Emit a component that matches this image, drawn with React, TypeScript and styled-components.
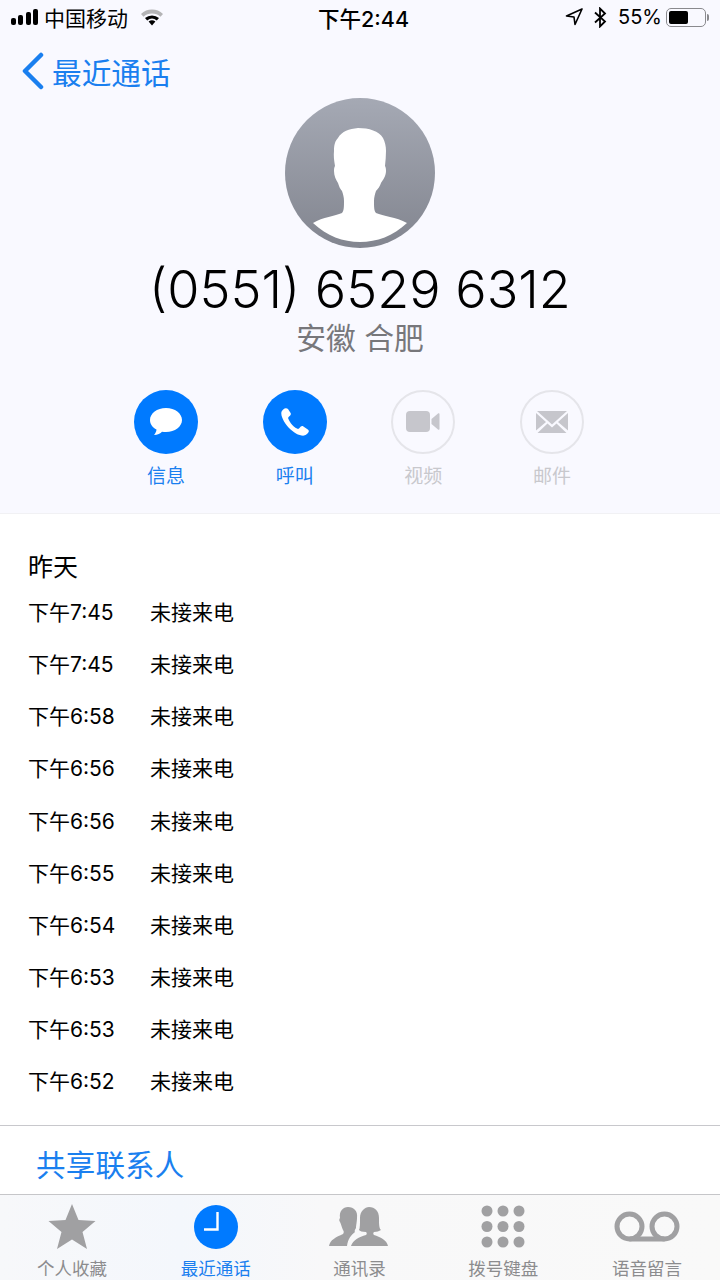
import React from 'react';
import styled, { createGlobalStyle } from 'styled-components';

const Global = createGlobalStyle`
  html, body { margin: 0; padding: 0; background: #fff; }
  body { font-family: 'Inter', 'Noto Sans CJK SC', sans-serif; }
`;

const FONT = `'Inter', 'Noto Sans CJK SC', sans-serif`;

const Page = styled.div`
  width: 720px;
  height: 1280px;
  display: flex;
  flex-direction: column;
  overflow: hidden;
  background: #fff;
  font-family: ${FONT};
`;

const Header = styled.header`
  height: 514px;
  flex: none;
  background: #f9f9ff;
  border-bottom: 1px solid #f1f1f4;
  box-sizing: border-box;
  display: flex;
  flex-direction: column;
`;

const StatusBar = styled.div`
  height: 36px;
  box-sizing: border-box;
  display: flex;
  align-items: center;
  justify-content: space-between;
  padding: 0 11px 2px 11px;
  color: #000;
  font-size: 21px;
`;

const StatusLeft = styled.div`
  display: flex;
  align-items: center;
  gap: 6px;
  width: 229px;
`;

const StatusRight = styled.div`
  display: flex;
  align-items: center;
  justify-content: flex-end;
  gap: 11px;
  width: 222px;
  font-size: 20px;
`;

const Clock = styled.div`
  font-size: 21.5px;
  font-weight: 500;
`;

const Signal = styled.div`
  display: flex;
  align-items: flex-end;
  gap: 2.3px;
  height: 16px;
`;

const SignalBar = styled.span<{ $h: number }>`
  width: 5px;
  height: ${(p) => p.$h}px;
  background: #000;
  border-radius: 2px;
`;

const Battery = styled.div`
  display: flex;
  align-items: center;
  gap: 1px;
  margin-left: -7px;
`;

const BatteryBody = styled.div`
  width: 40px;
  height: 19px;
  box-sizing: border-box;
  border: 1.5px solid #8a8a8e;
  border-radius: 5px;
  padding: 2px;
  display: flex;
`;

const BatteryLevel = styled.div`
  width: 55%;
  background: #000;
  border-radius: 2px;
`;

const BatteryTip = styled.div`
  width: 2px;
  height: 7px;
  background: #8a8a8e;
  border-radius: 0 2px 2px 0;
`;

const NavRow = styled.div`
  height: 62px;
  box-sizing: border-box;
  padding: 8px 22px 0 21px;
  display: flex;
  align-items: center;
  gap: 7px;
  color: #1a7fef;
  font-size: 29.7px;
`;

const Contact = styled.div`
  display: flex;
  flex-direction: column;
  align-items: center;
`;

const Avatar = styled.svg`
  display: block;
  width: 150px;
  height: 150px;
`;

const PhoneNumber = styled.div`
  font-size: 52.2px;
  font-weight: 300;
  line-height: 60px;
  margin-top: 11px;
  color: #000;
`;

const Location = styled.div`
  font-size: 29.8px;
  line-height: 38px;
  color: #77777b;
`;

const Actions = styled.div`
  display: flex;
  justify-content: center;
  gap: 64.6px;
  margin-top: 33px;
  padding-right: 2px;
`;

const Action = styled.div<{ $off?: boolean }>`
  width: 64px;
  display: flex;
  flex-direction: column;
  align-items: center;
  gap: 10px;
  font-size: 19px;
  line-height: 26px;
  white-space: nowrap;
  color: ${(p) => (p.$off ? '#c8c8cd' : '#1a7fef')};
`;

const ActionCircle = styled.div<{ $off?: boolean }>`
  width: 64px;
  height: 64px;
  box-sizing: border-box;
  border-radius: 50%;
  display: flex;
  align-items: center;
  justify-content: center;
  background: ${(p) => (p.$off ? 'transparent' : '#007aff')};
  border: ${(p) => (p.$off ? '2px solid #e5e5ea' : 'none')};
`;

const Content = styled.main`
  flex: 1;
  min-height: 0;
  display: flex;
  flex-direction: column;
`;

const Calls = styled.section`
  padding: 35px 28px 0;
  height: 612px;
  box-sizing: border-box;
  border-bottom: 1px solid #c8c8cc;
  flex: none;
`;

const DayTitle = styled.div`
  font-size: 25px;
  line-height: 36px;
  color: #000;
`;

const CallRow = styled.div`
  height: 52.15px;
  display: flex;
  align-items: center;
  font-size: 21px;
  color: #000;
`;

const CallTime = styled.span`
  width: 122px;
`;

const ShareLink = styled.div`
  flex: 1;
  padding-left: 36px;
  font-size: 29.5px;
  letter-spacing: 0.2px;
  line-height: 78px;
  color: #1a7fef;
`;

const TabBar = styled.nav`
  height: 86px;
  flex: none;
  box-sizing: border-box;
  border-top: 1px solid #c6c6c9;
  background: linear-gradient(90deg, #f7f8fa 0%, #f4f7fc 25%, #f8f8f9 45%, #f9f9f9 100%);
  display: grid;
  grid-template-columns: repeat(5, 1fr);
  padding-right: 1px;
`;

const Tab = styled.div<{ $active?: boolean }>`
  display: flex;
  flex-direction: column;
  align-items: center;
  font-size: 17.5px;
  line-height: 22px;
  color: ${(p) => (p.$active ? '#1a7fef' : '#8c8c8e')};
`;

const TabIcon = styled.div`
  height: 63px;
  display: flex;
  align-items: center;
  justify-content: center;
`;

const calls = ['7:45', '7:45', '6:58', '6:56', '6:56', '6:55', '6:54', '6:53', '6:53', '6:52'];

export default function App() {
  return (
    <Page>
      <Global />
      <Header>
        <StatusBar>
          <StatusLeft>
            <Signal>
              <SignalBar $h={7} />
              <SignalBar $h={10} />
              <SignalBar $h={13} />
              <SignalBar $h={16} />
            </Signal>
            <span>中国移动</span>
            <svg width="24" height="18" viewBox="0 0 24 18" style={{ marginLeft: 6 }}>
              <path d="M1 6 A16 16 0 0 1 23 6 L20.5 8.8 A12.5 12.5 0 0 0 3.5 8.8 Z" fill="#b4b4b6" />
              <path d="M5 10 A11 11 0 0 1 19 10 L16.8 12.4 A8 8 0 0 0 7.2 12.4 Z" fill="#000" />
              <path d="M8.6 13.6 A5.5 5.5 0 0 1 15.4 13.6 L12 17.4 Z" fill="#000" />
            </svg>
          </StatusLeft>
          <Clock>下午2:44</Clock>
          <StatusRight>
            <svg width="18" height="18" viewBox="0 0 18 18">
              <path d="M17 1 L1.5 8 L9 9 L10 16.5 Z" fill="none" stroke="#000" strokeWidth="1.6" strokeLinejoin="round" />
            </svg>
            <svg width="13" height="21" viewBox="0 0 13 21">
              <path d="M1 5.5 L11 14.5 L6 19.5 L6 1.5 L11 6.5 L1 15.5" fill="none" stroke="#000" strokeWidth="1.8" />
            </svg>
            <span>55%</span>
            <Battery>
              <BatteryBody>
                <BatteryLevel />
              </BatteryBody>
              <BatteryTip />
            </Battery>
          </StatusRight>
        </StatusBar>
        <NavRow>
          <svg width="24" height="38" viewBox="0 0 24 38">
            <path d="M20 3 L4 19 L20 35" fill="none" stroke="#1a7fef" strokeWidth="4.5" strokeLinecap="round" strokeLinejoin="round" />
          </svg>
          <span>最近通话</span>
        </NavRow>
        <Contact>
          <Avatar viewBox="0 0 150 150">
            <defs>
              <linearGradient id="avatarFill" x1="0" y1="0" x2="0" y2="1">
                <stop offset="0" stopColor="#a5a9b4" />
                <stop offset="1" stopColor="#82858f" />
              </linearGradient>
            </defs>
            <circle cx="75" cy="75" r="75" fill="url(#avatarFill)" />
            <path
              d="M28 125 C38 119 50 118 57 115 C59 113 59 108 59 103 C59 99 58 96 57 93 C55 91 54 88 53 85 C51 82 49 78 49 73 C49 70 49.500 69 50 68 C49 62 48.500 58 49 53 C49 47 50 43 53 40 C57 33 64 31 73 30 C84 30 94 33 98 40 C100 44 101 48 101 53 C101 58 100.500 63 100 68 C100.500 69 101 70 101 73 C101 78 98 82 96 85 C95 88 93 91 91 93 C90 96 89 99 89 103 C89 108 89 113 91 115 C98 118 111 119 122 125 C108 138 92 144 75 144 C58 144 42 138 28 125 Z"
              fill="#fff"
            />
          </Avatar>
          <PhoneNumber>(0551) 6529 6312</PhoneNumber>
          <Location>安徽 合肥</Location>
        </Contact>
        <Actions>
          <Action>
            <ActionCircle>
              <svg width="34" height="32" viewBox="0 0 34 32">
                <path d="M17 2 C8 2 1 7.5 1 14 C1 18 3.5 21.5 7.5 23.6 C7.4 25.5 6.5 27.5 5 29 C8.5 29 11.5 27.5 13 25.7 C14.3 25.9 15.6 26 17 26 C26 26 33 20.5 33 14 C33 7.5 26 2 17 2 Z" fill="#fff" />
              </svg>
            </ActionCircle>
            信息
          </Action>
          <Action>
            <ActionCircle>
              <svg width="30" height="30" viewBox="0 0 30 30">
                <path d="M6 1.2 C4.5 1 2 3 1.4 5 C0.6 9 4 15.5 8.5 20.4 C13.5 25.5 19.5 29 24 28.6 C26 28.3 28.4 26 28.8 24.6 C29 23.6 28.6 23 27.8 22.4 L23.4 19.4 C22.4 18.8 21.6 18.8 20.8 19.6 L19 21.4 C18.4 22 17.8 22 17 21.6 C15 20.4 12.5 18.4 11 16.4 C9.6 14.6 8.8 13 8.2 11.6 C8 11 8.2 10.4 8.6 10 L10.2 8.4 C11 7.6 11 6.8 10.6 6 L8 2 C7.4 1.4 6.8 1.2 6 1.2 Z" fill="#fff" />
              </svg>
            </ActionCircle>
            呼叫
          </Action>
          <Action $off>
            <ActionCircle $off>
              <svg width="34" height="22" viewBox="0 0 34 22">
                <rect x="0" y="0" width="24" height="21" rx="4" fill="#c6c6cc" />
                <path d="M25.5 8 L32 2.5 C33 2 33.5 2.5 33.5 3 V18 C33.5 18.5 33 19 32 18.5 L25.5 13 Z" fill="#c6c6cc" />
              </svg>
            </ActionCircle>
            视频
          </Action>
          <Action $off>
            <ActionCircle $off>
              <svg width="32" height="22" viewBox="0 0 32 22">
                <path d="M1 0 H31 L16 13.5 Z" fill="#c6c6cc" />
                <path d="M0 2 L10 11 L0 19.5 Z M32 2 L22 11 L32 19.5 Z" fill="#c6c6cc" />
                <path d="M1.5 22 L11.5 12.5 L16 16.5 L20.5 12.5 L30.5 22 Z" fill="#c6c6cc" />
              </svg>
            </ActionCircle>
            邮件
          </Action>
        </Actions>
      </Header>
      <Content>
        <Calls>
          <DayTitle>昨天</DayTitle>
          {calls.map((time, i) => (
            <CallRow key={i}>
              <CallTime>下午{time}</CallTime>
              <span>未接来电</span>
            </CallRow>
          ))}
        </Calls>
        <ShareLink>共享联系人</ShareLink>
      </Content>
      <TabBar>
        <Tab>
          <TabIcon>
            <svg width="48" height="46" viewBox="0 0 48 46">
              <path d="M24 0 L30.5 16 L47.5 17 L34.5 28 L39 45 L24 35.5 L9 45 L13.5 28 L0.5 17 L17.5 16 Z" fill="#a0a0a2" />
            </svg>
          </TabIcon>
          个人收藏
        </Tab>
        <Tab $active>
          <TabIcon>
            <svg width="44" height="44" viewBox="0 0 44 44">
              <circle cx="22" cy="22" r="22" fill="#007aff" />
              <path d="M23.5 7 V24.5 H10" fill="none" stroke="#fff" strokeWidth="2.4" />
            </svg>
          </TabIcon>
          最近通话
        </Tab>
        <Tab>
          <TabIcon>
            <svg width="60" height="41" viewBox="0 0 60 41">
              <path d="M0 40 C1 34 7 31 14 28 C15 27 15 25 14 24 C13 22 12 18 11 16 C10 15 10 13 11 12 C10 5 14 1 19 1 C25 1 29 5 28 12 C28 15 27 20 27 22 C26 24 25 25 26 26 C22 29 19 33 18 40 Z" fill="#a0a0a2" />
              <path d="M22 40 C24 34 30 31 37 29 C38 28 38 27 37 26 C33 26 31 25 30 24 C31 22 31 18 31 12 C31 5 36 1 40 1 C46 1 50 5 50 12 C50 18 50 22 52 24 C50 25 48 26 45 26 C44 27 44 28 45 29 C51 31 58 34 59 40 Z" fill="#a0a0a2" />
            </svg>
          </TabIcon>
          通讯录
        </Tab>
        <Tab>
          <TabIcon>
            <svg width="44" height="44" viewBox="0 0 44 44">
              {[0, 1, 2].flatMap((r) =>
                [0, 1, 2].map((c) => <circle key={`${r}${c}`} cx={6 + c * 16} cy={6 + r * 15.5} r="5.5" fill="#a0a0a2" />),
              )}
            </svg>
          </TabIcon>
          拨号键盘
        </Tab>
        <Tab>
          <TabIcon>
            <svg width="66" height="32" viewBox="0 0 66 32">
              <circle cx="15.5" cy="15.5" r="12.5" fill="none" stroke="#a0a0a2" strokeWidth="5" />
              <circle cx="50.5" cy="15.5" r="12.5" fill="none" stroke="#a0a0a2" strokeWidth="5" />
              <path d="M15.5 28 H50.5" stroke="#a0a0a2" strokeWidth="5" />
            </svg>
          </TabIcon>
          语音留言
        </Tab>
      </TabBar>
    </Page>
  );
}
